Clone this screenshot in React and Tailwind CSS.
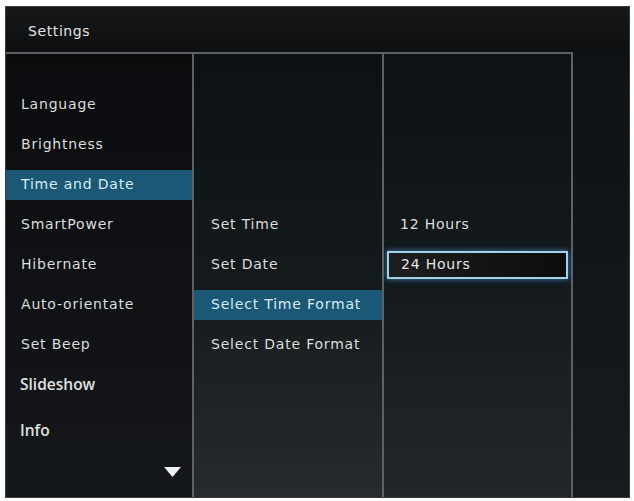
const mainMenu = [
  "Language",
  "Brightness",
  "Time and Date",
  "SmartPower",
  "Hibernate",
  "Auto-orientate",
  "Set Beep",
];

const timeMenu = ["Set Time", "Set Date", "Select Time Format", "Select Date Format"];

function Row({ label, active, className = "" }) {
  return (
    <div
      className={`h-[30px] flex items-center pl-[15px] tracking-[0.8px] ${
        active ? "bg-[#1b5876] text-[#d6ebf4]" : "text-[#dcdcdc]"
      } ${className}`}
    >
      <span className="-mt-[1px]">{label}</span>
    </div>
  );
}

export default function App() {
  return (
    <div className="w-[634px] h-[501px] bg-white pt-[6px] pl-[5px] pr-[4px] pb-[3px] font-['DejaVu_Sans',sans-serif] text-[14px]">
      <div className="w-full h-full flex flex-col bg-[#101214] border border-[#3a3a3a]">
        {/* header */}
        <div className="h-[45px] flex items-center pl-[22px] bg-gradient-to-b from-[#161718] to-[#0e0f10] text-[#e2e2e2] tracking-[0.6px]">
          <span className="mt-[4px]">Settings</span>
        </div>

        <div className="flex-1 flex">
          {/* main list */}
          <div className="w-[188px] border-t-2 border-r-2 border-[#5d6165] bg-gradient-to-b from-[#0a0c0e] to-[#15181b] flex flex-col pt-[36px] gap-[10px] relative">
            {mainMenu.map((m) => (
              <Row key={m} label={m} active={m === "Time and Date"} />
            ))}
            <div className="h-[30px] flex items-center pl-[14px] text-[#e0e0e0] font-['Open_Sans',sans-serif] font-semibold text-[15.5px]">
              <span>Slideshow</span>
            </div>
            <div className="h-[30px] flex items-center pl-[14px] mt-[6px] text-[#e0e0e0] font-['Open_Sans',sans-serif] font-semibold text-[15.5px]">
              <span>Info</span>
            </div>
            <svg className="absolute left-[158px] bottom-[20px]" width="17" height="10" viewBox="0 0 17 10">
              <path d="M0 0 H17 L8.5 10 Z" fill="#f0f0f0" />
            </svg>
          </div>

          {/* sub list */}
          <div className="w-[190px] border-t-2 border-r-2 border-[#5d6165] bg-gradient-to-b from-[#0c1114] via-[#14191c] to-[#282b2e] flex flex-col pt-[156px] gap-[10px]">
            {timeMenu.map((m) => (
              <Row key={m} label={m} active={m === "Select Time Format"} className="pl-[17px]" />
            ))}
          </div>

          {/* options */}
          <div className="w-[189px] border-t-2 border-r-2 border-[#5d6165] bg-gradient-to-b from-[#0c1215] via-[#14191c] to-[#22272a] flex flex-col pt-[156px] gap-[10px]">
            <Row label="12 Hours" className="pl-[16px]" />
            <div className="h-[30px] px-[3px] flex items-center">
              <div className="w-full h-[28px] flex items-center pl-[12px] border-2 border-[#9fd2ec] bg-gradient-to-r from-[#1e1e1e] to-[#0c0c0c] text-[#e4e4e4] tracking-[0.8px] shadow-[0_0_5px_1px_rgba(60,150,210,0.6)]">
                <span className="-mt-[1px]">24 Hours</span>
              </div>
            </div>
          </div>

          <div className="flex-1 bg-gradient-to-b from-[#0d1215] to-[#171b1e]" />
        </div>
      </div>
    </div>
  );
}
